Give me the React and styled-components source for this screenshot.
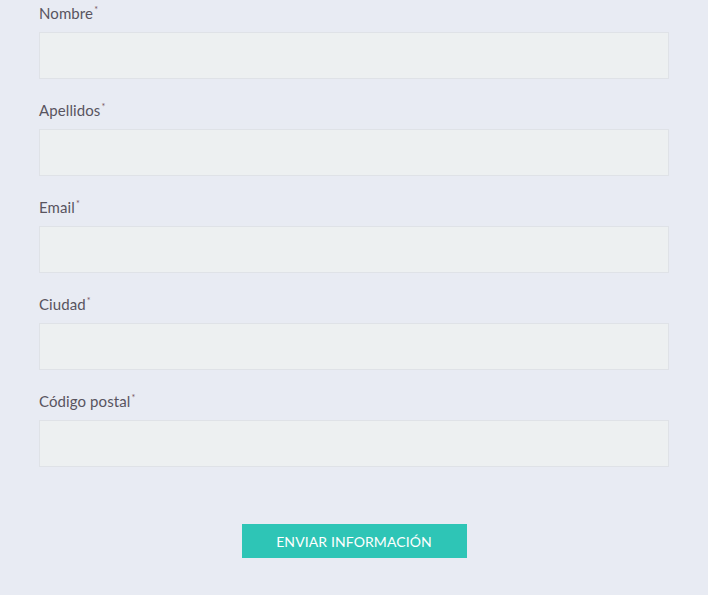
import React from "react";
import styled, { createGlobalStyle } from "styled-components";

const Global = createGlobalStyle`
  html, body { margin: 0; padding: 0; background: #e8ebf3; }
  body { font-family: "Lato", "Open Sans", sans-serif; }
`;

const Form = styled.form`
  width: 630px;
  padding: 3px 39px 40px 39px;
  display: flex;
  flex-direction: column;
`;

const Field = styled.div`
  display: flex;
  flex-direction: column;
  margin-bottom: 21px;
`;

const Label = styled.label`
  font-size: 15px;
  line-height: 20px;
  color: #58545f;
  margin-bottom: 9px;
  font-weight: 400;
  letter-spacing: 0.1px;
`;

const Star = styled.span`
  font-size: 9px;
  line-height: 9px;
  vertical-align: top;
  position: relative;
  top: 2px;
  margin-left: 1px;
  color: #7a5560;
`;

const Input = styled.input`
  box-sizing: border-box;
  height: 47px;
  width: 100%;
  background: #edf0f1;
  border: 1px solid #dfe2e7;
  outline: none;
  padding: 0 12px;
  font-size: 14px;
`;

const Actions = styled.div`
  display: flex;
  justify-content: center;
  margin-top: 36px;
`;

const Button = styled.button`
  width: 225px;
  height: 34px;
  background: #2ec5b6;
  border: none;
  color: #ffffff;
  font-family: "Lato", "Open Sans", sans-serif;
  font-size: 14px;
  letter-spacing: 0.1px;
  padding: 0;
  cursor: pointer;
`;

const fields = ["Nombre", "Apellidos", "Email", "Ciudad", "Código postal"];

export default function App() {
  return (
    <>
      <Global />
      <Form onSubmit={(e) => e.preventDefault()}>
        {fields.map((f) => (
          <Field key={f}>
            <Label>
              {f}
              <Star>*</Star>
            </Label>
            <Input type="text" />
          </Field>
        ))}
        <Actions>
          <Button type="submit">ENVIAR INFORMACIÓN</Button>
        </Actions>
      </Form>
    </>
  );
}
